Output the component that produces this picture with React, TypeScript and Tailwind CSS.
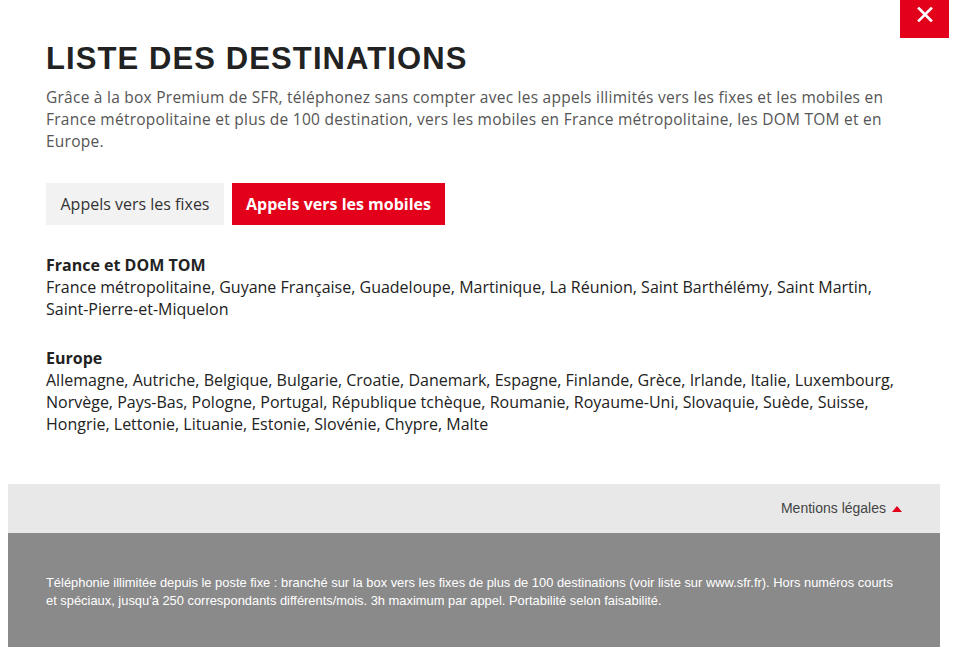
import React from "react";

export default function App() {
  return (
    <div className="relative min-h-[647px] w-[955px] bg-white" style={{ fontFamily: '"Open Sans", "Noto Sans", sans-serif' }}>
      <button className="absolute right-[6px] top-0 flex h-[38px] w-[49px] items-start justify-center bg-[#e2001a] pt-[7px]">
        <svg width="16" height="15" viewBox="0 0 16 15">
          <path d="M2 1.5 L14 13.5 M14 1.5 L2 13.5" stroke="white" strokeWidth="2.6" strokeLinecap="square" />
        </svg>
      </button>

      <div className="px-[46px] pt-[40px] pb-[49px]">
        <h1 className="text-[31px] font-bold leading-[38px] tracking-[1.1px] text-[#222]" style={{ fontFamily: '"Liberation Sans", Arial, sans-serif' }}>
          LISTE DES DESTINATIONS
        </h1>
        <p className="mt-[8px] text-[15.5px] leading-[22px] tracking-[0.25px] text-[#555]">
          Grâce à la box Premium de SFR, téléphonez sans compter avec les appels illimités vers les fixes et les mobiles en France métropolitaine et plus de 100 destination, vers les mobiles en France métropolitaine, les DOM TOM et en Europe.
        </p>

        <div className="mt-[31px] flex gap-[8px]">
          <button className="h-[42px] w-[178px] bg-[#f2f2f2] text-[16px] text-[#333]">Appels vers les fixes</button>
          <button className="h-[42px] w-[213px] bg-[#e2001a] text-[16px] font-bold text-white">Appels vers les mobiles</button>
        </div>

        <div className="mt-[29px] text-[16px] leading-[22px] text-[#222]">
          <div className="font-bold">France et DOM TOM</div>
          <div>
            France métropolitaine, Guyane Française, Guadeloupe, Martinique, La Réunion, Saint Barthélémy, Saint Martin, <span className="whitespace-nowrap">Saint-Pierre-et-Miquelon</span>
          </div>
        </div>

        <div className="mt-[27px] text-[16px] leading-[22px] text-[#222]">
          <div className="font-bold">Europe</div>
          <div>
            Allemagne, Autriche, Belgique, Bulgarie, Croatie, Danemark, Espagne, Finlande, Grèce, Irlande, Italie, Luxembourg, Norvège, Pays-Bas, Pologne, Portugal, République tchèque, Roumanie, Royaume-Uni, Slovaquie, Suède, Suisse, Hongrie, Lettonie, Lituanie, Estonie, Slovénie, Chypre, Malte
          </div>
        </div>
      </div>

      <footer className="mx-[8px] w-[932px]" style={{ fontFamily: '"Liberation Sans", Arial, sans-serif' }}>
        <div className="flex h-[49px] items-center justify-end bg-[#e8e8e8] pr-[38px]">
          <span className="text-[14px] text-[#444]">Mentions légales</span>
          <span className="ml-[6px] mt-[1px] h-0 w-0 border-x-[5px] border-b-[6px] border-x-transparent border-b-[#e2001a]" />
        </div>
        <div className="h-[140px] bg-[#8a8a8a] pl-[38px] pr-[40px] pt-[41px] text-[12.9px] leading-[18px] text-white">
          Téléphonie illimitée depuis le poste fixe : branché sur la box vers les fixes de plus de 100 destinations (voir liste sur www.sfr.fr). Hors numéros courts et spéciaux, jusqu'à 250 correspondants différents/mois. 3h maximum par appel. Portabilité selon faisabilité.
        </div>
      </footer>
    </div>
  );
}
